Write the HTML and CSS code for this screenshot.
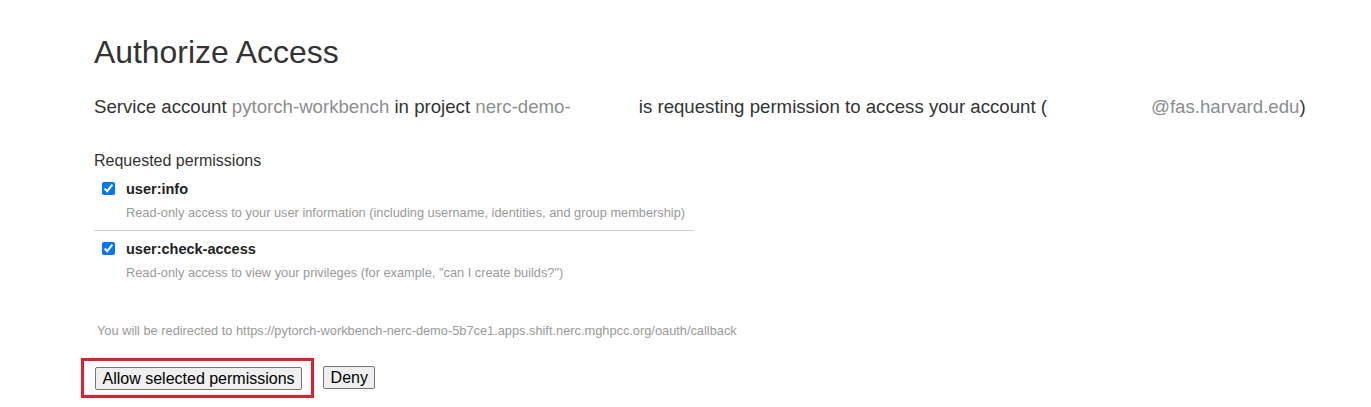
FILE: index.html
```html
<!DOCTYPE html>
<html lang="en">
<head>
<meta charset="utf-8">
<title>Authorize Access</title>
<link rel="stylesheet" href="styles.css">
</head>
<body>
<div class="page">
  <h1 class="title">Authorize Access</h1>
  <p class="lead">Service account <span class="muted">pytorch-workbench</span> in project <span class="muted">nerc-demo-<span class="redact redact-project"></span></span> is requesting permission to access your account (<span class="redact redact-user"></span><span class="muted">@fas.harvard.edu</span>)</p>
  <h2 class="section">Requested permissions</h2>
  <ul class="perms">
    <li class="perm perm-sep">
      <label class="perm-head"><input type="checkbox" class="perm-check" checked><span class="perm-name">user:info</span></label>
      <div class="perm-desc">Read-only access to your user information (including username, identities, and group membership)</div>
    </li>
    <li class="perm">
      <label class="perm-head"><input type="checkbox" class="perm-check" checked><span class="perm-name">user:check-access</span></label>
      <div class="perm-desc">Read-only access to view your privileges (for example, "can I create builds?")</div>
    </li>
  </ul>
  <p class="redirect">You will be redirected to https://pytorch-workbench-nerc-demo-5b7ce1.apps.shift.nerc.mghpcc.org/oauth/callback</p>
  <div class="actions">
    <div class="highlight"><button class="btn" type="button">Allow selected permissions</button></div>
    <button class="btn" type="button">Deny</button>
  </div>
</div>
</body>
</html>
```

FILE: styles.css
```css
html, body {
  margin: 0;
  padding: 0;
  background: #ffffff;
}

body {
  font-family: "Liberation Sans", Arial, sans-serif;
  color: #333333;
}

.page {
  padding: 34px 0 0 94px;
  display: flex;
  flex-direction: column;
  align-items: flex-start;
}

.title {
  margin: 0;
  font-size: 31.9px;
  line-height: 36px;
  font-weight: normal;
  color: #333333;
}

.lead {
  margin: 25.5px 0 0 0;
  font-size: 18.65px;
  line-height: 22px;
  white-space: nowrap;
}

.muted {
  color: #8b8d8f;
}

.redact {
  display: inline-block;
  height: 1px;
}

.redact-project {
  width: 63px;
}

.redact-user {
  width: 104px;
}

.section {
  margin: 33px 0 0 0;
  font-size: 16px;
  line-height: 20px;
  font-weight: normal;
}

.perms {
  list-style: none;
  margin: 0;
  padding: 0;
  width: 600px;
}

.perm {
  padding: 9px 0 8.5px 0;
}

.perm-sep {
  border-bottom: 1px solid #d1d1d1;
}

.perm-head {
  display: flex;
  align-items: center;
  height: 18px;
}

.perm-check {
  margin: 0 0 0 8px;
  width: 13px;
  height: 13px;
}

.perm-name {
  margin-left: 11px;
  font-size: 14.5px;
  line-height: 18px;
  font-weight: bold;
  color: #222222;
}

.perm-desc {
  margin: 7.6px 0 0 32px;
  font-size: 12.8px;
  line-height: 16px;
  color: #9a9a9a;
  white-space: nowrap;
}

.redirect {
  margin: 33px 0 0 3px;
  font-size: 12.8px;
  line-height: 16px;
  color: #9a9a9a;
  white-space: nowrap;
}

.actions {
  margin: 19px 0 0 -13px;
  display: flex;
  align-items: center;
  gap: 9px;
}

.highlight {
  border: 3px solid #e0202c;
  padding: 6px 9px 5px 11px;
  display: flex;
}

.btn {
  font-family: "Liberation Sans", Arial, sans-serif;
  font-size: 16px;
  line-height: 18px;
  padding: 2px 6.5px 1px 6.5px;
  color: #000000;
  background: #efefef;
  border: 1px solid #767676;
  border-radius: 2px;
  margin: 0;
}
```
